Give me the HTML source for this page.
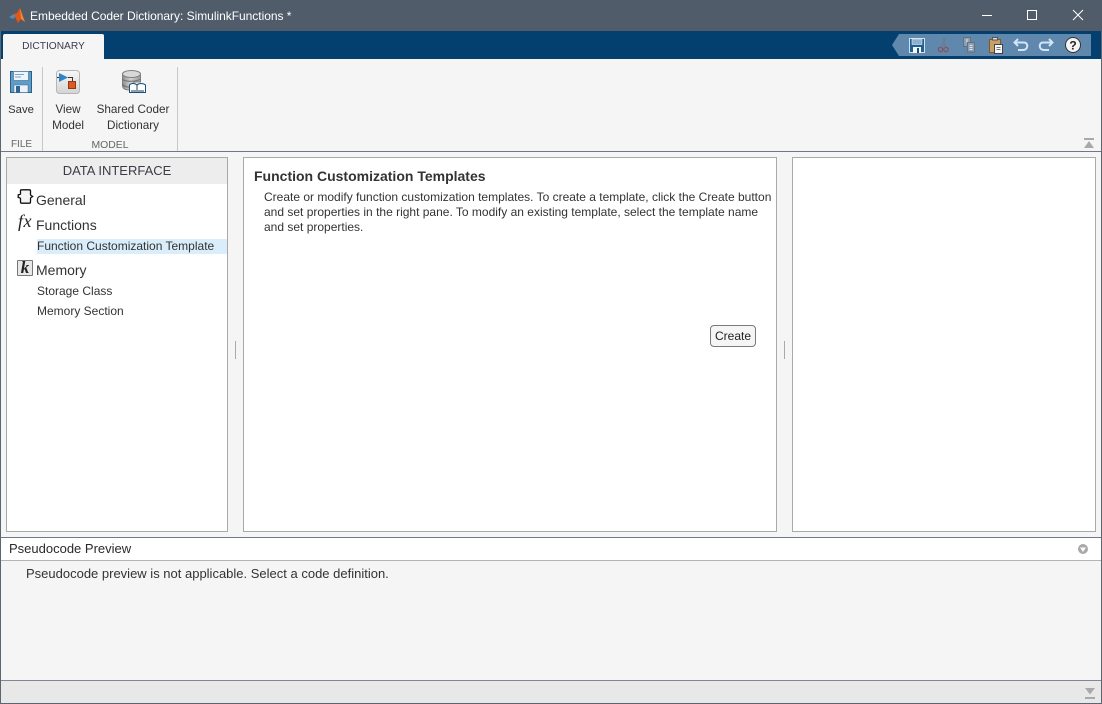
<!DOCTYPE html>
<html><head><meta charset="utf-8"><style>
html,body{margin:0;padding:0;width:1102px;height:704px;overflow:hidden;background:#f5f5f5;font-family:"Liberation Sans",sans-serif;color:#333}
.a{position:absolute}
.t{position:absolute;white-space:nowrap;font-size:12px;line-height:16px;color:#333}
.c{text-align:center}
svg{position:absolute;overflow:visible}
</style></head><body>
<div class="a" style="left:0;top:0;width:1102px;height:704px;background:#f5f5f5"></div>
<!-- title bar -->
<div class="a" style="left:0;top:0;width:1102px;height:31px;background:#505c69"></div>
<svg style="left:9px;top:8px" width="16" height="16" viewBox="0 0 16 16"><path d="M0 9 L5 6 L7 8 L4 11Z" fill="#4a8fc0"/><path d="M5 6 L8 5 L11 0 L16 14 L12 11 L9 15 L6 9Z" fill="#e0561b"/><path d="M11 0 L14 9 L16 14 L12 11Z" fill="#f08a2c"/></svg>
<div class="t" style="left:30px;top:8px;color:#fff;font-size:12px;letter-spacing:-.03px">Embedded Coder Dictionary: SimulinkFunctions *</div>
<svg style="left:982px;top:8px" width="110" height="15"><path d="M0 7.500H10" stroke="#fff" stroke-width="1" fill="none"/><rect x="45.500" y="2.500" width="9" height="9" fill="none" stroke="#fff"/><path d="M91 2L101 12M101 2L91 12" stroke="#fff" fill="none"/></svg>
<!-- blue bar -->
<div class="a" style="left:0;top:31px;width:1102px;height:28px;background:#03406f"></div>
<div class="a" style="left:3px;top:34px;width:101px;height:25px;background:#f5f5f5;border-radius:2px 2px 0 0"></div>
<div class="t c" style="left:3px;top:39px;width:101px;font-size:10.200px;color:#3c3c50">DICTIONARY</div>
<!-- quick access -->
<svg style="left:892px;top:34px" width="200" height="22" viewBox="0 0 200 22">
<path d="M7 0H199V22H7L0 11Z" fill="#6088ad"/>
<g transform="translate(17,4)"><rect x=".5" y=".5" width="15" height="14" fill="#1f5f94" stroke="#cfe0ee"/><rect x="3" y="1" width="10" height="5.500" fill="#8fb0cc" stroke="#dfeaf3" stroke-width=".6"/><rect x="4" y="9" width="8" height="6" fill="#f4f6f8"/><rect x="8" y="10" width="2" height="5" fill="#1f4f78"/></g>
<g transform="translate(46,4)" stroke="#8a4f60" stroke-width="1.200" fill="none"><circle cx="2.500" cy="11.500" r="2.200"/><circle cx="8" cy="11.500" r="2.200"/><path d="M3.500 9.500L7.500 0M7 9.500L5.500 0" stroke="#6b7a8a"/></g>
<g transform="translate(71,3)" fill="#8f9eac" stroke="#5e7286"><rect x=".5" y=".5" width="7" height="9"/><path d="M3 3H5M3 5H5" stroke="#dfe5ea"/><rect x="4.500" y="5.500" width="7" height="9.500"/><path d="M6.500 8.500H9.500M6.500 10.500H9.500M6.500 12.500H9.500" stroke="#dfe5ea"/></g>
<g transform="translate(97,2)"><rect x=".5" y="3.500" width="11" height="13" fill="#c9a064" stroke="#7b5a30"/><path d="M3.500 4V1.500H8.500V4Z" fill="#ddd" stroke="#555"/><rect x="5.500" y="8.500" width="8" height="9" fill="#f7f7f7" stroke="#444"/><path d="M7.500 11.500H11.500M7.500 13.500H11.500" stroke="#777"/></g>
<path d="M126 5L122.500 8.500L126 12M123 8.500H132C136.500 8.500 136.500 16 131 16H126" fill="none" stroke="#cfe6f8" stroke-width="2"/>
<path d="M157 5L160.500 8.500L157 12M160 8.500H151C146.500 8.500 146.500 16 152 16H157" fill="none" stroke="#cfe6f8" stroke-width="2"/>
<circle cx="181" cy="11" r="7.500" fill="#f4f4f4" stroke="#333"/>
<text x="181" y="15.500" text-anchor="middle" font-family="Liberation Sans" font-weight="bold" font-size="12" fill="#222">?</text>
</svg>
<!-- ribbon -->
<svg style="left:10px;top:71px" width="22" height="22" viewBox="0 0 22 22"><rect x=".5" y=".5" width="21" height="21" fill="#5f9cc6" stroke="#2a5f88"/><rect x="3.500" y=".5" width="15" height="9" fill="#eef5fa" stroke="#5e8fb5"/><path d="M5 3.500H14M5 6H11" stroke="#7fa3c1"/><rect x="4" y="14" width="14" height="7.500" fill="#eef2f6" stroke="#3e6f98" stroke-width=".5"/><rect x="6" y="15" width="4" height="6.500" fill="#2f6596"/></svg>
<svg style="left:56px;top:70px" width="24" height="24" viewBox="0 0 24 24"><defs><linearGradient id="g1" x1="0" y1="0" x2="0" y2="1"><stop offset="0" stop-color="#f7f7f7"/><stop offset="1" stop-color="#d4d4d4"/></linearGradient></defs><rect x=".5" y=".5" width="23" height="23" rx="3" fill="url(#g1)" stroke="#b5b5b5"/><path d="M3 3L12 7.500L3 12Z" fill="#2f84c6"/><path d="M1 7.500H3M12 7.500H16.500V11" stroke="#333" fill="none"/><rect x="12.500" y="11.500" width="7" height="7" fill="#e2571e" stroke="#8a3a1a"/></svg>
<svg style="left:121px;top:69px" width="25" height="26" viewBox="0 0 25 26"><defs><linearGradient id="g2" x1="0" y1="0" x2="1" y2="0"><stop offset="0" stop-color="#8f8f8f"/><stop offset=".45" stop-color="#d0d0d0"/><stop offset="1" stop-color="#9a9a9a"/></linearGradient></defs><path d="M1.500 5V17C1.500 20 5 21 9 21H13V13L19.500 13V5Z" fill="url(#g2)" stroke="#808080"/><ellipse cx="10.500" cy="5" rx="9" ry="3.500" fill="#d8d8d8" stroke="#808080"/><path d="M1.500 10C3 13 15 13 19.500 10M1.500 15C3 18 6 18 9 18" stroke="#6e6e6e" fill="none"/><path d="M8.500 16C10 14 14 14 16 16C18 14 22 14 24.500 16V23.500H8.500Z" fill="#fff" stroke="#1d4f7c"/><path d="M16 16V23.500M10 22H15M17 22H23" stroke="#1d3f5f"/></svg>
<div class="t c" style="left:1px;top:102px;width:40px;font-size:11.300px">Save</div>
<div class="t c" style="left:45px;top:102px;width:46px;font-size:11.700px">View</div>
<div class="t c" style="left:45px;top:118px;width:46px;font-size:11.700px">Model</div>
<div class="t c" style="left:92px;top:102px;width:82px;font-size:11.700px">Shared Coder</div>
<div class="t c" style="left:92px;top:118px;width:82px;font-size:11.700px">Dictionary</div>
<div class="t c" style="left:1px;top:137px;width:41px;font-size:10px;color:#666">FILE</div>
<div class="t c" style="left:45px;top:138px;width:130px;font-size:10.400px;color:#666">MODEL</div>
<div class="a" style="left:42px;top:67px;width:1px;height:84px;background:#c8c8c8"></div>
<div class="a" style="left:177px;top:67px;width:1px;height:84px;background:#c8c8c8"></div>
<svg style="left:1084px;top:138px" width="10" height="11"><rect y="0" width="10" height="2" fill="#a9a9a9"/><path d="M0 10L5 3L10 10Z" fill="#a9a9a9"/></svg>
<div class="a" style="left:0;top:151px;width:1102px;height:1px;background:#6f7983"></div>
<!-- left panel -->
<div class="a" style="left:6px;top:157px;width:220px;height:373px;background:#fff;border:1px solid #a9a9a9"></div>
<div class="a" style="left:7px;top:158px;width:220px;height:26px;background:#ededed"></div>
<div class="t c" style="left:7px;top:163px;width:220px;font-size:13px;color:#3c3c46">DATA INTERFACE</div>
<svg style="left:17px;top:189px" width="17" height="16" viewBox="0 0 17 16"><path d="M3.500 1.500Q3.500 .8 4.500 .8H12.500Q13.500 .8 13.500 2V5.500Q13.500 6.500 15.800 7.500Q13.500 8.500 13.500 9.500V13Q13.500 14.200 12.500 14.200H4.500Q3.500 14.200 3.500 13V9.500Q3.500 8.800 1.200 8.500V5.800Q3.500 5.500 3.500 5Z" fill="#f4f4f4" stroke="#111" stroke-width="1.300" stroke-linejoin="round"/></svg>
<div class="t" style="left:36px;top:192px;font-size:14px">General</div>
<div class="t" style="left:18px;top:213px;font-family:'Liberation Serif',serif;font-style:italic;font-size:18px;color:#222;letter-spacing:.5px">fx</div>
<div class="t" style="left:36px;top:217px;font-size:14px">Functions</div>
<div class="a" style="left:37px;top:239px;width:190px;height:15px;background:#d9edfa"></div>
<div class="t" style="left:37px;top:238px">Function Customization Template</div>
<div class="a" style="left:17px;top:260px;width:14px;height:14px;background:#e8e8e8;border:1px solid #777;border-radius:1px"></div>
<div class="t c" style="left:17px;top:260px;width:16px;font-family:'Liberation Serif',serif;font-style:italic;font-weight:bold;font-size:17px;color:#222">k</div>
<div class="t" style="left:36px;top:262px;font-size:14px">Memory</div>
<div class="t" style="left:37px;top:283px">Storage Class</div>
<div class="t" style="left:37px;top:303px">Memory Section</div>
<!-- splitter -->
<div class="a" style="left:235px;top:341px;width:1px;height:18px;background:#a9a9a9"></div>
<div class="a" style="left:784px;top:341px;width:1px;height:18px;background:#a9a9a9"></div>
<!-- middle panel -->
<div class="a" style="left:243px;top:157px;width:532px;height:373px;background:#fff;border:1px solid #a9a9a9"></div>
<div class="t" style="left:254px;top:168px;font-size:14px;font-weight:bold">Function Customization Templates</div>
<div class="t" style="left:264px;top:189px;line-height:15px;padding-top:1px">Create or modify function customization templates. To create a template, click the Create button<br>and set properties in the right pane. To modify an existing template, select the template name<br>and set properties.</div>
<div class="a" style="left:710px;top:325px;width:44px;height:20px;background:#f5f5f5;border:1px solid #7a7a7a;border-radius:4px"></div>
<div class="t c" style="left:710px;top:328px;width:46px;color:#222">Create</div>
<!-- right panel -->
<div class="a" style="left:792px;top:157px;width:302px;height:373px;background:#fff;border:1px solid #a9a9a9"></div>
<!-- pseudocode -->
<div class="a" style="left:0;top:537px;width:1102px;height:1px;background:#6f7983"></div>
<div class="a" style="left:0;top:538px;width:1102px;height:22px;background:#fff"></div>
<div class="a" style="left:0;top:560px;width:1102px;height:1px;background:#b4b4b4"></div>
<div class="t" style="left:9px;top:541px;font-size:13px;color:#2a2a2a">Pseudocode Preview</div>
<svg style="left:1078px;top:544px" width="10" height="10"><circle cx="5" cy="5" r="5" fill="#a9a9a9"/><path d="M2 3.500H8L5 8Z" fill="#fff"/></svg>
<div class="t" style="left:26px;top:566px;font-size:13px">Pseudocode preview is not applicable. Select a code definition.</div>
<div class="a" style="left:0;top:680px;width:1102px;height:1px;background:#7f8892"></div>
<div class="a" style="left:0;top:681px;width:1102px;height:22px;background:#e8e8e8"></div>
<svg style="left:1085px;top:688px" width="10" height="11"><path d="M0 0L5 6.500L10 0Z" fill="#a9a9a9"/><rect y="9" width="10" height="2" fill="#a9a9a9"/></svg>
<!-- window border -->
<div class="a" style="left:0;top:31px;width:1px;height:673px;background:#5c6670"></div>
<div class="a" style="left:1101px;top:31px;width:1px;height:673px;background:#5c6670"></div>
<div class="a" style="left:0;top:703px;width:1102px;height:1px;background:#5c6670"></div>
</body></html>
